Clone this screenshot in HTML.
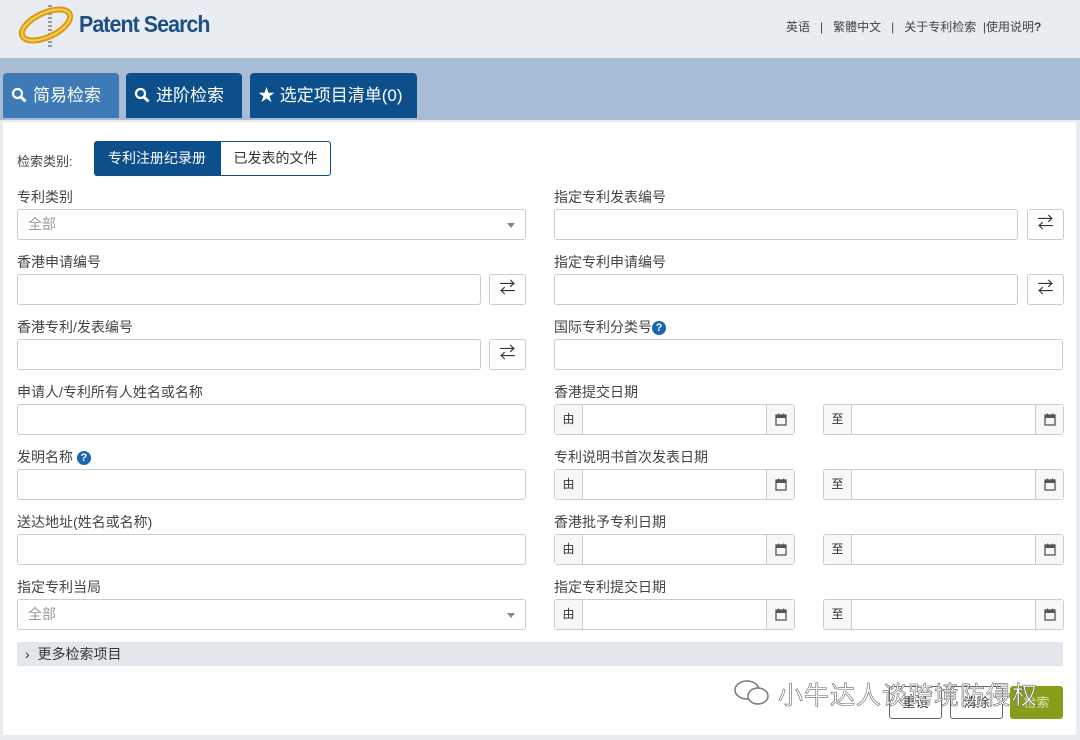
<!DOCTYPE html>
<html><head><meta charset="utf-8"><style>
*{box-sizing:border-box;margin:0;padding:0}
body{width:1080px;height:740px;background:#e9ecef;font-family:"Liberation Sans","Noto Sans CJK SC",sans-serif;position:relative;overflow:hidden;color:#333}
.abs{position:absolute}
.hdr{left:0;top:0;width:1080px;height:58px;background:#e9ecf0}
.nav{left:0;top:58px;width:1080px;height:62px;background:#a8bdd5}
.tab{top:73px;height:45px;color:#fff;font-size:17px;line-height:45px;padding-left:8px;border-radius:4px 4px 0 0}
.tab svg{vertical-align:-2px;margin-right:6px}
.panel{left:3px;top:122px;width:1073px;height:613px;background:#fff}
.lbl{font-size:14px;color:#444}
.inp{height:31px;border:1px solid #ccc;border-radius:3px;background:#fff}
.btn{width:37px;height:31px;border:1px solid #ccc;border-radius:3px;background:#fff;font-size:16px;text-align:center;line-height:28px;color:#333}
.sel{color:#999;font-size:14px;padding-left:10px;line-height:29px}
.caret{position:absolute;right:10px;top:13px;border-left:4px solid transparent;border-right:4px solid transparent;border-top:5px solid #888}
.dg{height:31px;border:1px solid #ccc;border-radius:3px;background:#fff;width:241px}
.dg .p{position:absolute;left:0;top:0;width:28px;height:29px;border-right:1px solid #ccc;background:#f7f7f7;font-size:12px;text-align:center;line-height:29px}
.dg .c{position:absolute;right:0;top:0;width:28px;height:29px;border-left:1px solid #ccc;background:#f7f7f7}
.dg .c svg{position:absolute;left:8px;top:8px}
.q{display:inline-block;width:14px;height:14px;border-radius:50%;background:#1a66b0;color:#fff;font-size:11px;text-align:center;line-height:14px;font-weight:bold;vertical-align:1px}
.fb{top:686px;height:33px;border:1px solid #666;border-radius:3px;background:#fff;font-size:13px;text-align:center;line-height:31px}
</style></head><body>
<div class="abs hdr"></div>
<div class="abs" style="left:17px;top:3px">
<svg width="58" height="46" viewBox="0 0 58 46"><line x1="33" y1="2" x2="33" y2="44" stroke="#999" stroke-width="4" stroke-dasharray="2 2"/><ellipse cx="29" cy="22" rx="26" ry="12" transform="rotate(-25 29 22)" fill="none" stroke="#d89a18" stroke-width="6"/><ellipse cx="29" cy="22" rx="26" ry="12" transform="rotate(-25 29 22)" fill="none" stroke="#f5cf50" stroke-width="2"/></svg></div>
<div class="abs" style="left:79px;top:11px;font-size:23px;font-weight:bold;color:#1d4f85;letter-spacing:-1px;transform:scaleX(0.93);transform-origin:left">Patent Search</div>
<div class="abs" style="left:786px;top:18px;font-size:12px;color:#444">英语 &nbsp;&nbsp;|&nbsp;&nbsp; 繁體中文 &nbsp;&nbsp;|&nbsp;&nbsp; 关于专利检索 &nbsp;|使用说明<b>?</b></div>
<div class="abs nav"></div>
<div class="abs tab" style="left:3px;width:116px;background:#3d7ab6"><svg width="16" height="16" viewBox="0 0 16 16"><circle cx="6.5" cy="6.5" r="4.5" fill="none" stroke="#fff" stroke-width="2.2"/><line x1="10" y1="10" x2="14.5" y2="14.5" stroke="#fff" stroke-width="3"/></svg>简易检索</div>
<div class="abs tab" style="left:126px;width:116px;background:#0d4f8b"><svg width="16" height="16" viewBox="0 0 16 16"><circle cx="6.5" cy="6.5" r="4.5" fill="none" stroke="#fff" stroke-width="2.2"/><line x1="10" y1="10" x2="14.5" y2="14.5" stroke="#fff" stroke-width="3"/></svg>进阶检索</div>
<div class="abs tab" style="left:250px;width:167px;background:#0d4f8b">★ 选定项目清单(0)</div>
<div class="abs panel"></div>
<div class="abs lbl" style="left:17px;top:151px;font-size:13px">检索类别:</div>
<div class="abs" style="left:94px;top:141px;width:126px;height:35px;background:#0d4f8b;color:#fff;border-radius:3px 0 0 3px;font-size:14px;text-align:center;line-height:35px">专利注册纪录册</div>
<div class="abs" style="left:220px;top:141px;width:111px;height:35px;border:1px solid #0d4f8b;border-radius:0 3px 3px 0;font-size:14px;text-align:center;line-height:33px">已发表的文件</div>

<div class="abs lbl" style="left:17px;top:187px">专利类别</div>
<div class="abs inp sel" style="left:17px;top:209px;width:509px">全部<span class="caret"></span></div>
<div class="abs lbl" style="left:17px;top:252px">香港申请编号</div>
<div class="abs inp" style="left:17px;top:274px;width:464px"></div><div class="abs btn" style="left:489px;top:274px">⇄</div>
<div class="abs lbl" style="left:17px;top:317px">香港专利/发表编号</div>
<div class="abs inp" style="left:17px;top:339px;width:464px"></div><div class="abs btn" style="left:489px;top:339px">⇄</div>
<div class="abs lbl" style="left:17px;top:382px">申请人/专利所有人姓名或名称</div>
<div class="abs inp" style="left:17px;top:404px;width:509px"></div>
<div class="abs lbl" style="left:17px;top:447px">发明名称 <span class="q">?</span></div>
<div class="abs inp" style="left:17px;top:469px;width:509px"></div>
<div class="abs lbl" style="left:17px;top:512px">送达地址(姓名或名称)</div>
<div class="abs inp" style="left:17px;top:534px;width:509px"></div>
<div class="abs lbl" style="left:17px;top:577px">指定专利当局</div>
<div class="abs inp sel" style="left:17px;top:599px;width:509px">全部<span class="caret"></span></div>

<div class="abs lbl" style="left:554px;top:187px">指定专利发表编号</div>
<div class="abs inp" style="left:554px;top:209px;width:464px"></div><div class="abs btn" style="left:1027px;top:209px">⇄</div>
<div class="abs lbl" style="left:554px;top:252px">指定专利申请编号</div>
<div class="abs inp" style="left:554px;top:274px;width:464px"></div><div class="abs btn" style="left:1027px;top:274px">⇄</div>
<div class="abs lbl" style="left:554px;top:317px">国际专利分类号<span class="q">?</span></div>
<div class="abs inp" style="left:554px;top:339px;width:509px"></div>
<div class="abs lbl" style="left:554px;top:382px">香港提交日期</div>
<div class="abs lbl" style="left:554px;top:447px">专利说明书首次发表日期</div>
<div class="abs lbl" style="left:554px;top:512px">香港批予专利日期</div>
<div class="abs lbl" style="left:554px;top:577px">指定专利提交日期</div>
<div class="abs dg" style="left:554px;top:404px"><span class="p">由</span><span class="c"><svg width="12" height="13" viewBox="0 0 12 13"><rect x="1" y="2" width="10" height="10" fill="none" stroke="#555" stroke-width="1.3"/><rect x="1" y="2" width="10" height="3" fill="#555"/><line x1="3.5" y1="0.5" x2="3.5" y2="3" stroke="#555"/><line x1="8.5" y1="0.5" x2="8.5" y2="3" stroke="#555"/></svg></span></div>
<div class="abs dg" style="left:823px;top:404px"><span class="p">至</span><span class="c"><svg width="12" height="13" viewBox="0 0 12 13"><rect x="1" y="2" width="10" height="10" fill="none" stroke="#555" stroke-width="1.3"/><rect x="1" y="2" width="10" height="3" fill="#555"/><line x1="3.5" y1="0.5" x2="3.5" y2="3" stroke="#555"/><line x1="8.5" y1="0.5" x2="8.5" y2="3" stroke="#555"/></svg></span></div>
<div class="abs dg" style="left:554px;top:469px"><span class="p">由</span><span class="c"><svg width="12" height="13" viewBox="0 0 12 13"><rect x="1" y="2" width="10" height="10" fill="none" stroke="#555" stroke-width="1.3"/><rect x="1" y="2" width="10" height="3" fill="#555"/><line x1="3.5" y1="0.5" x2="3.5" y2="3" stroke="#555"/><line x1="8.5" y1="0.5" x2="8.5" y2="3" stroke="#555"/></svg></span></div>
<div class="abs dg" style="left:823px;top:469px"><span class="p">至</span><span class="c"><svg width="12" height="13" viewBox="0 0 12 13"><rect x="1" y="2" width="10" height="10" fill="none" stroke="#555" stroke-width="1.3"/><rect x="1" y="2" width="10" height="3" fill="#555"/><line x1="3.5" y1="0.5" x2="3.5" y2="3" stroke="#555"/><line x1="8.5" y1="0.5" x2="8.5" y2="3" stroke="#555"/></svg></span></div>
<div class="abs dg" style="left:554px;top:534px"><span class="p">由</span><span class="c"><svg width="12" height="13" viewBox="0 0 12 13"><rect x="1" y="2" width="10" height="10" fill="none" stroke="#555" stroke-width="1.3"/><rect x="1" y="2" width="10" height="3" fill="#555"/><line x1="3.5" y1="0.5" x2="3.5" y2="3" stroke="#555"/><line x1="8.5" y1="0.5" x2="8.5" y2="3" stroke="#555"/></svg></span></div>
<div class="abs dg" style="left:823px;top:534px"><span class="p">至</span><span class="c"><svg width="12" height="13" viewBox="0 0 12 13"><rect x="1" y="2" width="10" height="10" fill="none" stroke="#555" stroke-width="1.3"/><rect x="1" y="2" width="10" height="3" fill="#555"/><line x1="3.5" y1="0.5" x2="3.5" y2="3" stroke="#555"/><line x1="8.5" y1="0.5" x2="8.5" y2="3" stroke="#555"/></svg></span></div>
<div class="abs dg" style="left:554px;top:599px"><span class="p">由</span><span class="c"><svg width="12" height="13" viewBox="0 0 12 13"><rect x="1" y="2" width="10" height="10" fill="none" stroke="#555" stroke-width="1.3"/><rect x="1" y="2" width="10" height="3" fill="#555"/><line x1="3.5" y1="0.5" x2="3.5" y2="3" stroke="#555"/><line x1="8.5" y1="0.5" x2="8.5" y2="3" stroke="#555"/></svg></span></div>
<div class="abs dg" style="left:823px;top:599px"><span class="p">至</span><span class="c"><svg width="12" height="13" viewBox="0 0 12 13"><rect x="1" y="2" width="10" height="10" fill="none" stroke="#555" stroke-width="1.3"/><rect x="1" y="2" width="10" height="3" fill="#555"/><line x1="3.5" y1="0.5" x2="3.5" y2="3" stroke="#555"/><line x1="8.5" y1="0.5" x2="8.5" y2="3" stroke="#555"/></svg></span></div>

<div class="abs" style="left:17px;top:642px;width:1046px;height:24px;background:#e3e7eb;font-size:14px;line-height:24px;padding-left:8px">›&nbsp; 更多检索项目</div>
<div class="abs fb" style="left:889px;width:53px">重设</div>
<div class="abs fb" style="left:950px;width:53px">清除</div>
<div class="abs fb" style="left:1010px;width:53px;background:#8a9c1c;border-color:#8a9c1c;color:#dfe6b0">检索</div>
<svg class="abs" style="left:732px;top:678px" width="40" height="30" viewBox="0 0 40 30"><ellipse cx="15" cy="12" rx="12" ry="9" fill="none" stroke="#777" stroke-width="1.5"/><ellipse cx="26" cy="18" rx="10" ry="8" fill="#fff" stroke="#777" stroke-width="1.5"/></svg>
<div class="abs" style="left:778px;top:676px;font-size:25px;color:#fff;-webkit-text-stroke:0.6px #666;letter-spacing:1px">小牛达人谈跨境防侵权</div>
</body></html>
